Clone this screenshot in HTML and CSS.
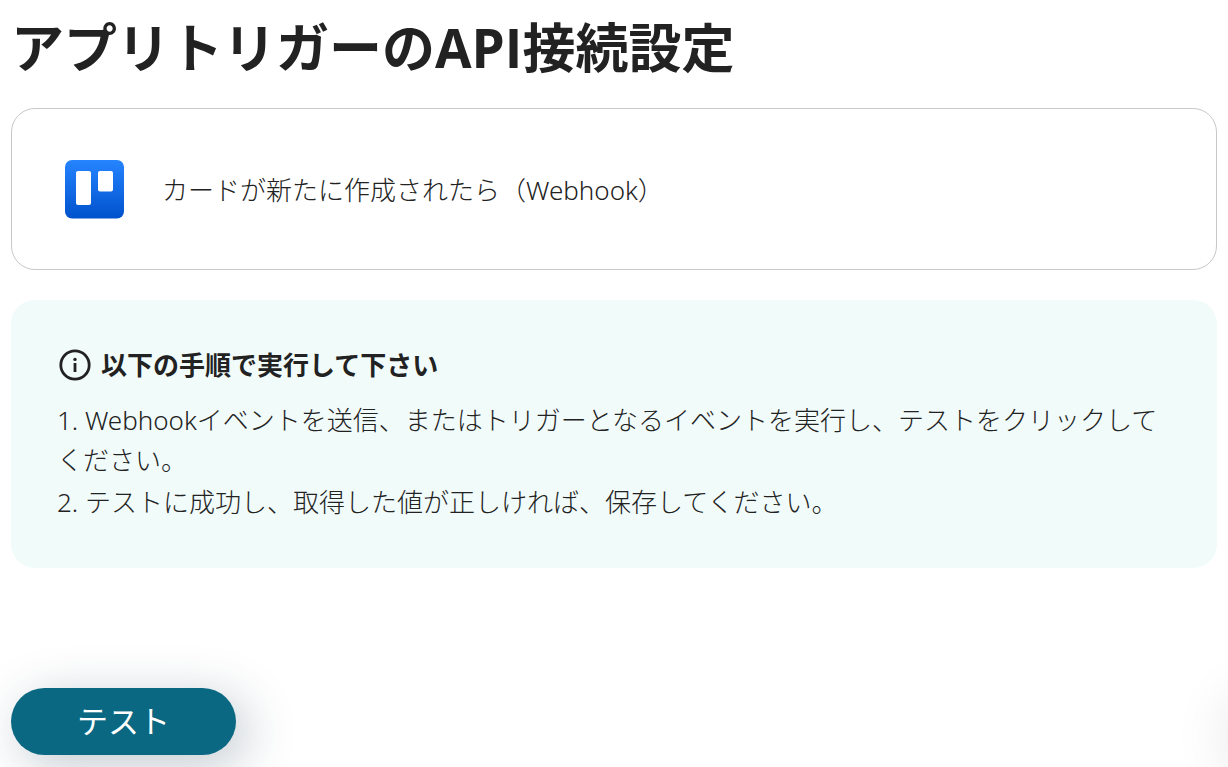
FILE: index.html
```html
<!DOCTYPE html>
<html lang="ja">
<head>
  <meta charset="UTF-8">
  <meta name="viewport" content="width=device-width, initial-scale=1.0">
  <title>アプリトリガーのAPI接続設定</title>
  <link rel="stylesheet" href="styles.css">
</head>
<body>
  <main>
    <h1>アプリトリガーのAPI接続設定</h1>

    <section class="trigger-card">
      <svg class="app-icon" viewBox="0 0 60 60" role="img" aria-label="Trello">
        <defs>
          <linearGradient id="trello-blue" x1="0" y1="0" x2="0" y2="1">
            <stop offset="0" stop-color="#2684ff"/>
            <stop offset="1" stop-color="#0052cc"/>
          </linearGradient>
        </defs>
        <rect x="0" y="1" width="59" height="58.5" rx="7" fill="url(#trello-blue)"/>
        <rect x="11" y="12" width="15" height="34" rx="2" fill="#fff"/>
        <rect x="33" y="12" width="15" height="20.5" rx="2" fill="#fff"/>
      </svg>
      <p>カードが新たに作成されたら（Webhook）</p>
    </section>

    <section class="guide">
      <h2>
        <svg class="info-icon" viewBox="0 0 34 34" aria-hidden="true">
          <circle cx="18" cy="17" r="14.2" fill="none" stroke="#222" stroke-width="2.8"/>
          <circle cx="18" cy="11.4" r="1.7" fill="#222"/>
          <path d="M18 15v9" stroke="#222" stroke-width="2.8"/>
        </svg>
        以下の手順で実行して下さい
      </h2>
      <p>1. Webhookイベントを送信、またはトリガーとなるイベントを実行し、テストをクリックしてください。</p>
      <p>2. テストに成功し、取得した値が正しければ、保存してください。</p>
    </section>

    <button type="button" class="test-button">テスト</button>
  </main>
  <div class="edge-shadow"></div>
</body>
</html>
```
FILE: styles.css
```css
* {
  box-sizing: border-box;
}

body {
  margin: 0;
  background-color: #fff;
  color: #222;
  font-family: "Open Sans", "Noto Sans CJK JP", sans-serif;
  font-size: 26px;
  overflow-x: hidden;
}

main {
  padding: 16px 11px 12px;
}

h1,
h2,
p {
  margin: 0;
}

p {
  font-family: "Noto Sans", "Noto Sans CJK JP", sans-serif;
  font-weight: 300;
}

h1 {
  font-size: 53px;
  line-height: 64px;
  margin-bottom: 28px;
}

.trigger-card {
  display: flex;
  align-items: center;
  gap: 37px;
  padding: 50px 53px;
  border: 1px solid #c8c8c8;
  border-radius: 24px;
  margin-bottom: 30px;
}

.app-icon {
  flex-shrink: 0;
  width: 60px;
  height: 60px;
}

.guide {
  padding: 44px 46px 46px;
  background-color: #f1fbfa;
  border-radius: 24px;
  margin-bottom: 120px;
  line-height: 40px;
}

.guide p + p {
  margin-top: 2px;
}

h2 {
  display: flex;
  align-items: center;
  gap: 10px;
  font-size: 26px;
  line-height: 42px;
  margin-bottom: 14px;
}

.info-icon {
  flex-shrink: 0;
  width: 34px;
  height: 34px;
}

.test-button {
  display: block;
  width: 225px;
  height: 67px;
  padding: 0 0 4px;
  border: none;
  border-radius: 34px;
  background-color: #0b6882;
  color: #fff;
  font-family: inherit;
  font-size: 31px;
  cursor: pointer;
  box-shadow: 10px 10px 50px rgba(34, 60, 80, 0.28);
}

.edge-shadow {
  position: fixed;
  right: -80px;
  bottom: -10px;
  width: 80px;
  height: 80px;
  border-radius: 50%;
  box-shadow: 0 0 60px rgba(0, 0, 0, 0.12);
  pointer-events: none;
}
```
